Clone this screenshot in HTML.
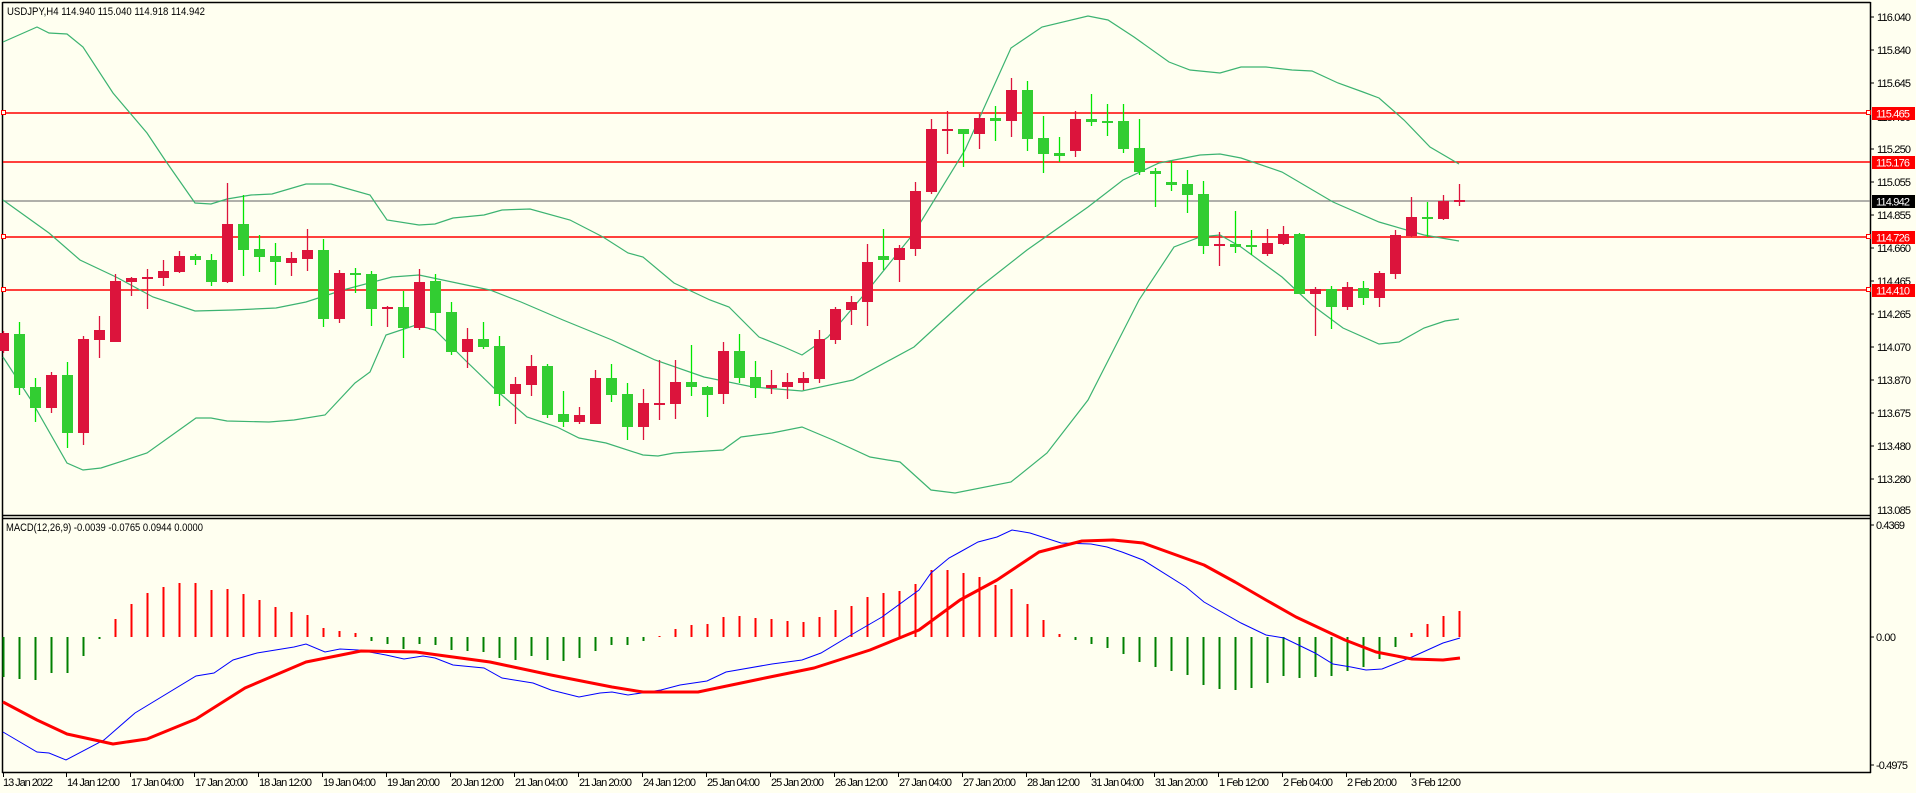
<!DOCTYPE html>
<html><head><meta charset="utf-8"><style>
html,body{margin:0;padding:0;background:#fffff0;}
svg{display:block;font-family:"Liberation Sans",sans-serif;}
</style></head><body>
<svg width="1916" height="793" viewBox="0 0 1916 793" xmlns="http://www.w3.org/2000/svg">
<rect width="1916" height="793" fill="#fffff0"/>
<g fill="none" stroke="#000" stroke-width="1.5">
<line x1="2.5" y1="2.5" x2="1870.5" y2="2.5"/>
<line x1="2.5" y1="2" x2="2.5" y2="773"/>
<line x1="1870.5" y1="2" x2="1870.5" y2="773"/>
<line x1="2" y1="515.5" x2="1871" y2="515.5"/>
<line x1="2" y1="518.5" x2="1871" y2="518.5"/>
<line x1="2" y1="772.5" x2="1871" y2="772.5"/>
</g>
<g stroke="#ff0000" stroke-width="1.5">
<line x1="3" y1="113" x2="1870" y2="113"/>
<line x1="3" y1="162" x2="1870" y2="162"/>
<line x1="3" y1="237" x2="1870" y2="237"/>
<line x1="3" y1="290" x2="1870" y2="290"/>
</g>
<line x1="3" y1="201" x2="1870" y2="201" stroke="#808080" stroke-width="1.3"/>
<g fill="#fffff0" stroke="#ff0000" stroke-width="1">
<rect x="1.5" y="110.5" width="4" height="4"/><rect x="1.5" y="234.5" width="4" height="4"/><rect x="1.5" y="287.5" width="4" height="4"/>
<rect x="1866.5" y="110.5" width="4" height="4"/><rect x="1866.5" y="234.5" width="4" height="4"/><rect x="1866.5" y="287.5" width="4" height="4"/>
</g>
<g fill="none" stroke="#3cb371" stroke-width="1.2">
<polyline points="3,42 37,27 49,33 67,34 83,47 113,93 147,133 165,160 195,203 211,204 227,199 251,195 272,194 306,184 331,184 370,195 387,220 419,225 435,224 453,218 484,215 502,210 530,209 570,220 603,237 628,253 643,257 674,283 710,300 729,307 759,337 784,347 802,355 828,337 868,290 914,233 965,150 1011,48 1042,27 1088,16 1108,20 1134,37 1169,62 1190,70 1220,73 1241,67 1266,67 1292,70 1312,71 1338,83 1363,92 1379,98 1404,120 1430,147 1459,164"/>
<polyline points="3,200 49,233 80,260 116,277 153,297 195,311 233,310 276,308 306,302 343,290 392,277 419,275 490,290 521,302 563,320 612,340 655,360 704,377 753,387 802,391 853,380 914,347 976,290 1027,250 1088,207 1123,180 1159,163 1200,155 1220,154 1241,158 1282,172 1333,202 1379,222 1424,235 1459,241"/>
<polyline points="3,357 31,400 67,463 83,470 101,468 147,453 196,418 211,418 227,421 269,422 294,420 325,415 355,383 370,372 386,335 416,325 435,330 465,360 496,390 527,417 557,427 579,438 606,443 643,455 658,456 674,453 723,450 741,437 772,433 802,427 833,440 870,457 900,462 931,490 955,493 1011,482 1047,453 1088,400 1139,300 1174,247 1200,237 1220,235 1241,247 1282,277 1312,305 1343,328 1379,344 1399,342 1424,328 1445,321 1459,319"/>
</g>
<g stroke-width="1.3">
<g stroke="#dc143c" fill="#dc143c">
<line x1="3.5" y1="331" x2="3.5" y2="353"/><rect x="-2" y="333" width="11" height="18" stroke="none"/>
<line x1="51.5" y1="372" x2="51.5" y2="413"/><rect x="46" y="375" width="11" height="33" stroke="none"/>
<line x1="83.5" y1="336" x2="83.5" y2="445"/><rect x="78" y="339" width="11" height="94" stroke="none"/>
<line x1="99.5" y1="316" x2="99.5" y2="358"/><rect x="94" y="330" width="11" height="10" stroke="none"/>
<line x1="115.5" y1="274" x2="115.5" y2="342"/><rect x="110" y="281" width="11" height="61" stroke="none"/>
<line x1="131.5" y1="277" x2="131.5" y2="296"/><rect x="126" y="278" width="11" height="4" stroke="none"/>
<line x1="147.5" y1="269" x2="147.5" y2="309"/><rect x="142" y="277" width="11" height="2" stroke="none"/>
<line x1="163.5" y1="260" x2="163.5" y2="286"/><rect x="158" y="271" width="11" height="7" stroke="none"/>
<line x1="179.5" y1="251" x2="179.5" y2="273"/><rect x="174" y="256" width="11" height="16" stroke="none"/>
<line x1="227.5" y1="183" x2="227.5" y2="283"/><rect x="222" y="224" width="11" height="58" stroke="none"/>
<line x1="291.5" y1="252" x2="291.5" y2="276"/><rect x="286" y="258" width="11" height="5" stroke="none"/>
<line x1="307.5" y1="229" x2="307.5" y2="271"/><rect x="302" y="250" width="11" height="9" stroke="none"/>
<line x1="339.5" y1="270" x2="339.5" y2="323"/><rect x="334" y="273" width="11" height="46" stroke="none"/>
<line x1="387.5" y1="306" x2="387.5" y2="327"/><rect x="382" y="307" width="11" height="2" stroke="none"/>
<line x1="419.5" y1="269" x2="419.5" y2="330"/><rect x="414" y="282" width="11" height="46" stroke="none"/>
<line x1="467.5" y1="328" x2="467.5" y2="368"/><rect x="462" y="339" width="11" height="13" stroke="none"/>
<line x1="515.5" y1="377" x2="515.5" y2="424"/><rect x="510" y="384" width="11" height="10" stroke="none"/>
<line x1="531.5" y1="355" x2="531.5" y2="396"/><rect x="526" y="366" width="11" height="19" stroke="none"/>
<line x1="579.5" y1="407" x2="579.5" y2="424"/><rect x="574" y="415" width="11" height="7" stroke="none"/>
<line x1="595.5" y1="370" x2="595.5" y2="424"/><rect x="590" y="378" width="11" height="46" stroke="none"/>
<line x1="643.5" y1="389" x2="643.5" y2="440"/><rect x="638" y="403" width="11" height="24" stroke="none"/>
<line x1="659.5" y1="360" x2="659.5" y2="420"/><rect x="654" y="403" width="11" height="2" stroke="none"/>
<line x1="675.5" y1="360" x2="675.5" y2="419"/><rect x="670" y="382" width="11" height="22" stroke="none"/>
<line x1="723.5" y1="342" x2="723.5" y2="404"/><rect x="718" y="351" width="11" height="43" stroke="none"/>
<line x1="771.5" y1="370" x2="771.5" y2="394"/><rect x="766" y="385" width="11" height="3" stroke="none"/>
<line x1="787.5" y1="373" x2="787.5" y2="399"/><rect x="782" y="382" width="11" height="5" stroke="none"/>
<line x1="803.5" y1="372" x2="803.5" y2="390"/><rect x="798" y="378" width="11" height="5" stroke="none"/>
<line x1="819.5" y1="330" x2="819.5" y2="383"/><rect x="814" y="339" width="11" height="40" stroke="none"/>
<line x1="835.5" y1="307" x2="835.5" y2="344"/><rect x="830" y="309" width="11" height="31" stroke="none"/>
<line x1="851.5" y1="296" x2="851.5" y2="325"/><rect x="846" y="302" width="11" height="8" stroke="none"/>
<line x1="867.5" y1="244" x2="867.5" y2="326"/><rect x="862" y="262" width="11" height="40" stroke="none"/>
<line x1="899.5" y1="245" x2="899.5" y2="282"/><rect x="894" y="248" width="11" height="12" stroke="none"/>
<line x1="915.5" y1="182" x2="915.5" y2="256"/><rect x="910" y="191" width="11" height="58" stroke="none"/>
<line x1="931.5" y1="119" x2="931.5" y2="194"/><rect x="926" y="129" width="11" height="63" stroke="none"/>
<line x1="947.5" y1="111" x2="947.5" y2="154"/><rect x="942" y="129" width="11" height="2" stroke="none"/>
<line x1="979.5" y1="114" x2="979.5" y2="149"/><rect x="974" y="118" width="11" height="16" stroke="none"/>
<line x1="1011.5" y1="78" x2="1011.5" y2="137"/><rect x="1006" y="90" width="11" height="31" stroke="none"/>
<line x1="1075.5" y1="111" x2="1075.5" y2="157"/><rect x="1070" y="119" width="11" height="32" stroke="none"/>
<line x1="1219.5" y1="232" x2="1219.5" y2="266"/><rect x="1214" y="244" width="11" height="2" stroke="none"/>
<line x1="1267.5" y1="229" x2="1267.5" y2="256"/><rect x="1262" y="243" width="11" height="11" stroke="none"/>
<line x1="1283.5" y1="226" x2="1283.5" y2="245"/><rect x="1278" y="234" width="11" height="10" stroke="none"/>
<line x1="1315.5" y1="287" x2="1315.5" y2="336"/><rect x="1310" y="289" width="11" height="5" stroke="none"/>
<line x1="1347.5" y1="282" x2="1347.5" y2="310"/><rect x="1342" y="287" width="11" height="20" stroke="none"/>
<line x1="1379.5" y1="271" x2="1379.5" y2="307"/><rect x="1374" y="273" width="11" height="25" stroke="none"/>
<line x1="1395.5" y1="230" x2="1395.5" y2="279"/><rect x="1390" y="235" width="11" height="39" stroke="none"/>
<line x1="1411.5" y1="197" x2="1411.5" y2="237"/><rect x="1406" y="217" width="11" height="19" stroke="none"/>
<line x1="1443.5" y1="195" x2="1443.5" y2="220"/><rect x="1438" y="201" width="11" height="18" stroke="none"/>
<line x1="1459.5" y1="184" x2="1459.5" y2="206"/><rect x="1454" y="200" width="11" height="2" stroke="none"/>
</g>
<g stroke="#00e600" fill="#32cd32">
<line x1="19.5" y1="322" x2="19.5" y2="395"/><rect x="14" y="334" width="11" height="54" stroke="none"/>
<line x1="35.5" y1="378" x2="35.5" y2="422"/><rect x="30" y="387" width="11" height="21" stroke="none"/>
<line x1="67.5" y1="362" x2="67.5" y2="448"/><rect x="62" y="375" width="11" height="58" stroke="none"/>
<line x1="195.5" y1="254" x2="195.5" y2="265"/><rect x="190" y="256" width="11" height="4" stroke="none"/>
<line x1="211.5" y1="254" x2="211.5" y2="286"/><rect x="206" y="260" width="11" height="22" stroke="none"/>
<line x1="243.5" y1="195" x2="243.5" y2="276"/><rect x="238" y="224" width="11" height="26" stroke="none"/>
<line x1="259.5" y1="235" x2="259.5" y2="272"/><rect x="254" y="249" width="11" height="8" stroke="none"/>
<line x1="275.5" y1="243" x2="275.5" y2="285"/><rect x="270" y="256" width="11" height="6" stroke="none"/>
<line x1="323.5" y1="239" x2="323.5" y2="327"/><rect x="318" y="250" width="11" height="69" stroke="none"/>
<line x1="355.5" y1="268" x2="355.5" y2="293"/><rect x="350" y="273" width="11" height="2" stroke="none"/>
<line x1="371.5" y1="271" x2="371.5" y2="326"/><rect x="366" y="274" width="11" height="35" stroke="none"/>
<line x1="403.5" y1="291" x2="403.5" y2="358"/><rect x="398" y="307" width="11" height="21" stroke="none"/>
<line x1="435.5" y1="274" x2="435.5" y2="331"/><rect x="430" y="281" width="11" height="32" stroke="none"/>
<line x1="451.5" y1="302" x2="451.5" y2="355"/><rect x="446" y="312" width="11" height="40" stroke="none"/>
<line x1="483.5" y1="322" x2="483.5" y2="349"/><rect x="478" y="339" width="11" height="8" stroke="none"/>
<line x1="499.5" y1="336" x2="499.5" y2="406"/><rect x="494" y="346" width="11" height="48" stroke="none"/>
<line x1="547.5" y1="364" x2="547.5" y2="418"/><rect x="542" y="366" width="11" height="49" stroke="none"/>
<line x1="563.5" y1="391" x2="563.5" y2="427"/><rect x="558" y="414" width="11" height="8" stroke="none"/>
<line x1="611.5" y1="364" x2="611.5" y2="402"/><rect x="606" y="378" width="11" height="17" stroke="none"/>
<line x1="627.5" y1="383" x2="627.5" y2="440"/><rect x="622" y="394" width="11" height="33" stroke="none"/>
<line x1="691.5" y1="345" x2="691.5" y2="396"/><rect x="686" y="382" width="11" height="5" stroke="none"/>
<line x1="707.5" y1="386" x2="707.5" y2="417"/><rect x="702" y="387" width="11" height="8" stroke="none"/>
<line x1="739.5" y1="334" x2="739.5" y2="383"/><rect x="734" y="351" width="11" height="27" stroke="none"/>
<line x1="755.5" y1="361" x2="755.5" y2="398"/><rect x="750" y="377" width="11" height="11" stroke="none"/>
<line x1="883.5" y1="229" x2="883.5" y2="270"/><rect x="878" y="256" width="11" height="4" stroke="none"/>
<line x1="963.5" y1="129" x2="963.5" y2="167"/><rect x="958" y="129" width="11" height="5" stroke="none"/>
<line x1="995.5" y1="106" x2="995.5" y2="141"/><rect x="990" y="118" width="11" height="3" stroke="none"/>
<line x1="1027.5" y1="81" x2="1027.5" y2="151"/><rect x="1022" y="90" width="11" height="49" stroke="none"/>
<line x1="1043.5" y1="116" x2="1043.5" y2="173"/><rect x="1038" y="138" width="11" height="16" stroke="none"/>
<line x1="1059.5" y1="137" x2="1059.5" y2="162"/><rect x="1054" y="153" width="11" height="3" stroke="none"/>
<line x1="1091.5" y1="94" x2="1091.5" y2="126"/><rect x="1086" y="119" width="11" height="3" stroke="none"/>
<line x1="1107.5" y1="104" x2="1107.5" y2="136"/><rect x="1102" y="121" width="11" height="2" stroke="none"/>
<line x1="1123.5" y1="104" x2="1123.5" y2="153"/><rect x="1118" y="121" width="11" height="28" stroke="none"/>
<line x1="1139.5" y1="119" x2="1139.5" y2="175"/><rect x="1134" y="148" width="11" height="24" stroke="none"/>
<line x1="1155.5" y1="168" x2="1155.5" y2="207"/><rect x="1150" y="171" width="11" height="3" stroke="none"/>
<line x1="1171.5" y1="161" x2="1171.5" y2="191"/><rect x="1166" y="182" width="11" height="3" stroke="none"/>
<line x1="1187.5" y1="170" x2="1187.5" y2="213"/><rect x="1182" y="184" width="11" height="11" stroke="none"/>
<line x1="1203.5" y1="181" x2="1203.5" y2="254"/><rect x="1198" y="194" width="11" height="52" stroke="none"/>
<line x1="1235.5" y1="211" x2="1235.5" y2="253"/><rect x="1230" y="244" width="11" height="3" stroke="none"/>
<line x1="1251.5" y1="230" x2="1251.5" y2="255"/><rect x="1246" y="245" width="11" height="2" stroke="none"/>
<line x1="1299.5" y1="233" x2="1299.5" y2="294"/><rect x="1294" y="234" width="11" height="60" stroke="none"/>
<line x1="1331.5" y1="286" x2="1331.5" y2="329"/><rect x="1326" y="289" width="11" height="18" stroke="none"/>
<line x1="1363.5" y1="281" x2="1363.5" y2="305"/><rect x="1358" y="288" width="11" height="10" stroke="none"/>
<line x1="1427.5" y1="202" x2="1427.5" y2="237"/><rect x="1422" y="217" width="11" height="2" stroke="none"/>
</g>
</g>
<g font-size="11" fill="#000" lengthAdjust="spacingAndGlyphs">
<text x="7" y="15" textLength="198" lengthAdjust="spacingAndGlyphs">USDJPY,H4  114.940 115.040 114.918 114.942</text>
<text x="1877" y="21" textLength="34">116.040</text><text x="1877" y="54" textLength="34">115.840</text><text x="1877" y="87" textLength="34">115.645</text><text x="1877" y="121" textLength="34">115.450</text>
<text x="1877" y="153" textLength="34">115.250</text><text x="1877" y="186" textLength="34">115.055</text><text x="1877" y="219" textLength="34">114.855</text><text x="1877" y="252" textLength="34">114.660</text>
<text x="1877" y="285" textLength="34">114.465</text><text x="1877" y="318" textLength="34">114.265</text><text x="1877" y="351" textLength="34">114.070</text><text x="1877" y="384" textLength="34">113.870</text>
<text x="1877" y="417" textLength="34">113.675</text><text x="1877" y="450" textLength="34">113.480</text><text x="1877" y="483" textLength="34">113.280</text><text x="1877" y="514" textLength="34">113.085</text>
</g>
<g stroke="#000" stroke-width="1">
<line x1="1870" y1="17" x2="1874" y2="17"/><line x1="1870" y1="50" x2="1874" y2="50"/><line x1="1870" y1="83" x2="1874" y2="83"/><line x1="1870" y1="149" x2="1874" y2="149"/><line x1="1870" y1="182" x2="1874" y2="182"/><line x1="1870" y1="215" x2="1874" y2="215"/><line x1="1870" y1="248" x2="1874" y2="248"/><line x1="1870" y1="281" x2="1874" y2="281"/><line x1="1870" y1="314" x2="1874" y2="314"/><line x1="1870" y1="347" x2="1874" y2="347"/><line x1="1870" y1="380" x2="1874" y2="380"/><line x1="1870" y1="413" x2="1874" y2="413"/><line x1="1870" y1="446" x2="1874" y2="446"/><line x1="1870" y1="479" x2="1874" y2="479"/><line x1="1870" y1="525" x2="1874" y2="525"/><line x1="1870" y1="637" x2="1874" y2="637"/><line x1="1870" y1="765" x2="1874" y2="765"/>
</g>
<g font-size="11" lengthAdjust="spacingAndGlyphs">
<rect x="1872" y="107" width="43" height="13" fill="#ff0000"/><text x="1876" y="117.5" fill="#fff" textLength="34">115.465</text>
<rect x="1872" y="156" width="43" height="13" fill="#ff0000"/><text x="1876" y="166.5" fill="#fff" textLength="34">115.176</text>
<rect x="1872" y="195" width="43" height="13" fill="#000"/><text x="1876" y="205.5" fill="#fff" textLength="34">114.942</text>
<rect x="1872" y="231" width="43" height="13" fill="#ff0000"/><text x="1876" y="241.5" fill="#fff" textLength="34">114.726</text>
<rect x="1872" y="284" width="43" height="13" fill="#ff0000"/><text x="1876" y="294.5" fill="#fff" textLength="34">114.410</text>
</g>
<text x="6" y="531" font-size="11" textLength="197" lengthAdjust="spacingAndGlyphs">MACD(12,26,9) -0.0039 -0.0765 0.0944 0.0000</text>
<g font-size="11" lengthAdjust="spacingAndGlyphs"><text x="1876" y="529" textLength="29">0.4369</text><text x="1876" y="641" textLength="20">0.00</text><text x="1876" y="769" textLength="32">-0.4975</text></g>
<g stroke="#008000" stroke-width="2">
<line x1="3.5" y1="637" x2="3.5" y2="677"/><line x1="19.5" y1="637" x2="19.5" y2="679"/><line x1="35.5" y1="637" x2="35.5" y2="680"/><line x1="51.5" y1="637" x2="51.5" y2="673"/><line x1="67.5" y1="637" x2="67.5" y2="673"/><line x1="83.5" y1="637" x2="83.5" y2="656"/><line x1="99.5" y1="637" x2="99.5" y2="639"/>
<line x1="371.5" y1="637" x2="371.5" y2="641"/><line x1="387.5" y1="637" x2="387.5" y2="644"/><line x1="403.5" y1="637" x2="403.5" y2="649"/><line x1="419.5" y1="637" x2="419.5" y2="644"/><line x1="435.5" y1="637" x2="435.5" y2="645"/><line x1="451.5" y1="637" x2="451.5" y2="650"/><line x1="467.5" y1="637" x2="467.5" y2="651"/><line x1="483.5" y1="637" x2="483.5" y2="652"/><line x1="499.5" y1="637" x2="499.5" y2="658"/><line x1="515.5" y1="637" x2="515.5" y2="660"/><line x1="531.5" y1="637" x2="531.5" y2="656"/><line x1="547.5" y1="637" x2="547.5" y2="660"/><line x1="563.5" y1="637" x2="563.5" y2="661"/><line x1="579.5" y1="637" x2="579.5" y2="658"/><line x1="595.5" y1="637" x2="595.5" y2="651"/><line x1="611.5" y1="637" x2="611.5" y2="645"/><line x1="627.5" y1="637" x2="627.5" y2="645"/><line x1="643.5" y1="637" x2="643.5" y2="641"/>
<line x1="1075.5" y1="637" x2="1075.5" y2="640"/><line x1="1091.5" y1="637" x2="1091.5" y2="644"/><line x1="1107.5" y1="637" x2="1107.5" y2="648"/><line x1="1123.5" y1="637" x2="1123.5" y2="654"/><line x1="1139.5" y1="637" x2="1139.5" y2="662"/><line x1="1155.5" y1="637" x2="1155.5" y2="667"/><line x1="1171.5" y1="637" x2="1171.5" y2="671"/><line x1="1187.5" y1="637" x2="1187.5" y2="675"/><line x1="1203.5" y1="637" x2="1203.5" y2="685"/><line x1="1219.5" y1="637" x2="1219.5" y2="689"/><line x1="1235.5" y1="637" x2="1235.5" y2="690"/><line x1="1251.5" y1="637" x2="1251.5" y2="688"/><line x1="1267.5" y1="637" x2="1267.5" y2="683"/><line x1="1283.5" y1="637" x2="1283.5" y2="676"/><line x1="1299.5" y1="637" x2="1299.5" y2="678"/><line x1="1315.5" y1="637" x2="1315.5" y2="677"/><line x1="1331.5" y1="637" x2="1331.5" y2="676"/><line x1="1347.5" y1="637" x2="1347.5" y2="671"/><line x1="1363.5" y1="637" x2="1363.5" y2="667"/><line x1="1379.5" y1="637" x2="1379.5" y2="659"/><line x1="1395.5" y1="637" x2="1395.5" y2="647"/>
</g>
<g stroke="#ff0000" stroke-width="2">
<line x1="115.5" y1="637" x2="115.5" y2="619"/><line x1="131.5" y1="637" x2="131.5" y2="604"/><line x1="147.5" y1="637" x2="147.5" y2="593"/><line x1="163.5" y1="637" x2="163.5" y2="587"/><line x1="179.5" y1="637" x2="179.5" y2="583"/><line x1="195.5" y1="637" x2="195.5" y2="583"/><line x1="211.5" y1="637" x2="211.5" y2="590"/><line x1="227.5" y1="637" x2="227.5" y2="589"/><line x1="243.5" y1="637" x2="243.5" y2="594"/><line x1="259.5" y1="637" x2="259.5" y2="600"/><line x1="275.5" y1="637" x2="275.5" y2="607"/><line x1="291.5" y1="637" x2="291.5" y2="612"/><line x1="307.5" y1="637" x2="307.5" y2="615"/><line x1="323.5" y1="637" x2="323.5" y2="628"/><line x1="339.5" y1="637" x2="339.5" y2="631"/><line x1="355.5" y1="637" x2="355.5" y2="633"/>
<line x1="659.5" y1="637" x2="659.5" y2="636"/><line x1="675.5" y1="637" x2="675.5" y2="629"/><line x1="691.5" y1="637" x2="691.5" y2="625"/><line x1="707.5" y1="637" x2="707.5" y2="624"/><line x1="723.5" y1="637" x2="723.5" y2="617"/><line x1="739.5" y1="637" x2="739.5" y2="616"/><line x1="755.5" y1="637" x2="755.5" y2="618"/><line x1="771.5" y1="637" x2="771.5" y2="619"/><line x1="787.5" y1="637" x2="787.5" y2="621"/><line x1="803.5" y1="637" x2="803.5" y2="622"/><line x1="819.5" y1="637" x2="819.5" y2="617"/><line x1="835.5" y1="637" x2="835.5" y2="610"/><line x1="851.5" y1="637" x2="851.5" y2="606"/><line x1="867.5" y1="637" x2="867.5" y2="597"/><line x1="883.5" y1="637" x2="883.5" y2="593"/><line x1="899.5" y1="637" x2="899.5" y2="591"/><line x1="915.5" y1="637" x2="915.5" y2="584"/><line x1="931.5" y1="637" x2="931.5" y2="570"/><line x1="947.5" y1="637" x2="947.5" y2="570"/><line x1="963.5" y1="637" x2="963.5" y2="573"/><line x1="979.5" y1="637" x2="979.5" y2="577"/><line x1="995.5" y1="637" x2="995.5" y2="585"/><line x1="1011.5" y1="637" x2="1011.5" y2="589"/><line x1="1027.5" y1="637" x2="1027.5" y2="604"/><line x1="1043.5" y1="637" x2="1043.5" y2="620"/><line x1="1059.5" y1="637" x2="1059.5" y2="634"/>
<line x1="1411.5" y1="637" x2="1411.5" y2="633"/><line x1="1427.5" y1="637" x2="1427.5" y2="624"/><line x1="1443.5" y1="637" x2="1443.5" y2="616"/><line x1="1459.5" y1="637" x2="1459.5" y2="611"/>
</g>
<polyline fill="none" stroke="#0000ff" stroke-width="1" points="3,732 37,752 49,753 66,760 104,740 135,713 196,676 214,673 233,660 257,653 294,647 306,644 325,652 340,649 358,650 386,655 404,659 423,656 435,658 453,665 484,668 502,678 533,683 551,690 579,697 600,693 612,692 628,695 661,690 680,685 707,681 726,672 772,664 802,660 821,653 851,635 882,617 919,590 931,573 949,558 960,552 978,542 997,537 1012,530 1030,533 1061,543 1091,544 1107,547 1122,552 1143,560 1186,587 1204,602 1241,623 1266,635 1284,638 1315,653 1333,664 1351,667 1366,670 1382,669 1412,657 1443,643 1460,638"/>
<polyline fill="none" stroke="#ff0000" stroke-width="3" stroke-linejoin="round" points="3,702 37,720 67,734 113,744 147,739 196,719 245,688 306,662 361,651 416,652 490,662 551,675 612,687 643,692 698,692 765,678 814,668 870,650 919,630 960,600 997,580 1039,552 1082,541 1113,540 1143,543 1204,565 1235,582 1266,600 1296,617 1345,640 1376,652 1412,659 1443,660 1460,658"/>
<g stroke="#000" stroke-width="1">
<line x1="3.5" y1="772" x2="3.5" y2="777"/><line x1="66.5" y1="772" x2="66.5" y2="777"/><line x1="130.5" y1="772" x2="130.5" y2="777"/><line x1="194.5" y1="772" x2="194.5" y2="777"/><line x1="258.5" y1="772" x2="258.5" y2="777"/><line x1="322.5" y1="772" x2="322.5" y2="777"/><line x1="386.5" y1="772" x2="386.5" y2="777"/><line x1="450.5" y1="772" x2="450.5" y2="777"/><line x1="514.5" y1="772" x2="514.5" y2="777"/><line x1="578.5" y1="772" x2="578.5" y2="777"/><line x1="642.5" y1="772" x2="642.5" y2="777"/><line x1="706.5" y1="772" x2="706.5" y2="777"/><line x1="770.5" y1="772" x2="770.5" y2="777"/><line x1="834.5" y1="772" x2="834.5" y2="777"/><line x1="898.5" y1="772" x2="898.5" y2="777"/><line x1="962.5" y1="772" x2="962.5" y2="777"/><line x1="1026.5" y1="772" x2="1026.5" y2="777"/><line x1="1090.5" y1="772" x2="1090.5" y2="777"/><line x1="1154.5" y1="772" x2="1154.5" y2="777"/><line x1="1218.5" y1="772" x2="1218.5" y2="777"/><line x1="1282.5" y1="772" x2="1282.5" y2="777"/><line x1="1346.5" y1="772" x2="1346.5" y2="777"/><line x1="1410.5" y1="772" x2="1410.5" y2="777"/>
</g>
<g font-size="11" lengthAdjust="spacingAndGlyphs">
<text x="3" y="786" textLength="50">13 Jan 2022</text><text x="67" y="786" textLength="53">14 Jan 12:00</text><text x="131" y="786" textLength="53">17 Jan 04:00</text><text x="195" y="786" textLength="53">17 Jan 20:00</text><text x="259" y="786" textLength="53">18 Jan 12:00</text><text x="323" y="786" textLength="53">19 Jan 04:00</text><text x="387" y="786" textLength="53">19 Jan 20:00</text><text x="451" y="786" textLength="53">20 Jan 12:00</text><text x="515" y="786" textLength="53">21 Jan 04:00</text><text x="579" y="786" textLength="53">21 Jan 20:00</text><text x="643" y="786" textLength="53">24 Jan 12:00</text><text x="707" y="786" textLength="53">25 Jan 04:00</text><text x="771" y="786" textLength="53">25 Jan 20:00</text><text x="835" y="786" textLength="53">26 Jan 12:00</text><text x="899" y="786" textLength="53">27 Jan 04:00</text><text x="963" y="786" textLength="53">27 Jan 20:00</text><text x="1027" y="786" textLength="53">28 Jan 12:00</text><text x="1091" y="786" textLength="53">31 Jan 04:00</text><text x="1155" y="786" textLength="53">31 Jan 20:00</text><text x="1219" y="786" textLength="50">1 Feb 12:00</text><text x="1283" y="786" textLength="50">2 Feb 04:00</text><text x="1347" y="786" textLength="50">2 Feb 20:00</text><text x="1411" y="786" textLength="50">3 Feb 12:00</text>
</g>
</svg>
</body></html>
